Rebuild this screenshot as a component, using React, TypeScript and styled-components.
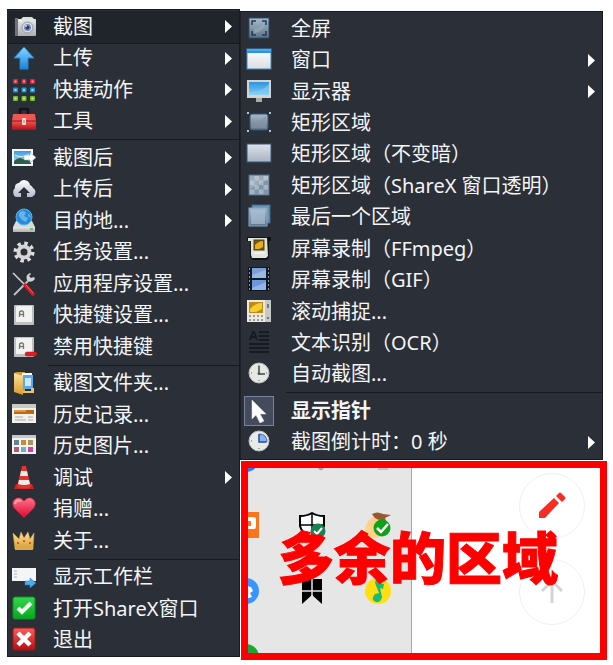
import React from "react";
import styled, { createGlobalStyle, css } from "styled-components";

const Global = createGlobalStyle`
  *, *::before, *::after { box-sizing: border-box; }
  body {
    margin: 0;
    background: #fff;
    font-family: "Noto Sans", "Noto Sans CJK SC", sans-serif;
  }
`;

const Page = styled.main`
  display: grid;
  grid-template-columns: 233fr 367fr;
  min-height: 100vh;
  padding: 9px 6px 5px 7px;
`;

const Column = styled.div`
  display: grid;
  grid-template-rows: 449fr 199fr;
  row-gap: 1px;
  padding-top: 2px;
  min-width: 0;
`;

const Menu = styled.nav<{ $sub?: boolean }>`
  display: flex;
  flex-direction: column;
  min-width: 0;
  padding: 2px 0 ${(p) => (p.$sub ? 2 : 1)}px;
  background: #2b2f38;
  border-right: 1px solid #171a20;
  box-shadow: inset 0 1px #171a20, inset 1px 0 #1d2127, inset 0 -1px #171a20;
  ${(p) => (p.$sub ? css`margin-right: 4px;` : css`margin-bottom: 3px;`)}
`;

const Row = styled.button<{ $sub?: boolean; $active?: boolean; $bold?: boolean }>`
  display: flex;
  flex: 1 0 30px;
  align-items: center;
  gap: ${(p) => (p.$sub ? 20 : 17)}px;
  margin: 0;
  padding: 0 7px 0 ${(p) => (p.$sub ? 7 : 5)}px;
  border: 0;
  background: ${(p) => (p.$active ? "#20242b" : "transparent")};
  box-shadow: ${(p) => (p.$active ? "0 1px #171a20" : "none")};
  color: #f4f5f6;
  font: inherit;
  font-size: 20px;
  font-weight: ${(p) => (p.$bold ? 700 : 400)};
  line-height: 24px;
  text-align: left;
  white-space: nowrap;
`;

const Label = styled.span`
  flex: 1;
`;

const IconBox = styled.span<{ $checked?: boolean }>`
  display: grid;
  place-items: center;
  flex: none;
  width: 24px;
  height: 24px;
  ${(p) =>
    p.$checked &&
    css`
      background: #434b5d;
      outline: 2px solid #434b5d;
      box-shadow: 0 0 0 3px #78829a;
    `}
`;

const Glyph = styled.svg`
  display: block;
  width: 24px;
  height: 24px;
  overflow: visible;
`;

const Arrow = styled.svg`
  flex: none;
  width: 7px;
  height: 13px;
  fill: #fff;
`;

const Divider = styled.hr<{ $sub?: boolean }>`
  flex: none;
  align-self: stretch;
  height: 1px;
  margin: 2px 0 2px ${(p) => (p.$sub ? 46 : 41)}px;
  border: 0;
  background: #171a20;
`;

const Region = styled.section`
  position: relative;
  display: grid;
  grid-template-columns: 171fr 195fr;
  margin-left: 1px;
  overflow: hidden;
  background: #fff;
`;

const Tray = styled.div`
  overflow: hidden;
  height: 199px;
  background: #e6e6e6;
  border-right: 1px solid #a6a6a6;
`;

const TrayGrid = styled.div`
  display: grid;
  grid-template-columns: repeat(3, 66px);
  grid-auto-rows: 66px;
  place-items: center;
  margin: -35px 0 0 -28px;
`;

const TrayIcon = styled.svg`
  display: block;
  width: 26px;
  height: 26px;
  overflow: visible;
`;

const Tools = styled.div`
  display: flex;
  flex-direction: column;
  align-items: flex-end;
  gap: 20px;
  padding: 12px 22px 0 0;
`;

const RoundButton = styled.button`
  display: grid;
  place-items: center;
  width: 66px;
  height: 66px;
  padding: 0;
  border: 1px solid #f0f0f0;
  border-radius: 50%;
  background: #fff;
`;

const ToolIcon = styled.svg`
  width: 28px;
  height: 28px;
`;

const Outline = styled.div`
  position: absolute;
  inset: 0;
  display: grid;
  place-items: center;
  padding: 0 12px 8px 0;
  border: 7px solid #fe0000;
  color: #fe0000;
  font-size: 56px;
  font-weight: 900;
  line-height: 64px;
  white-space: nowrap;
  -webkit-text-stroke: 1px #fe0000;
  pointer-events: none;
`;

const Defs = styled.svg`
  position: absolute;
  width: 0;
  height: 0;
`;

const gradients: [string, string, string][] = [
  ["blueUp", "#8ad6ff", "#1485df"],
  ["red", "#f6605c", "#b80d12"],
  ["silver", "#e8e8e8", "#acaeb0"],
  ["glass", "#a9bccd", "#5d7489"],
  ["pale", "#dfe2ec", "#a7b2c3"],
  ["screen", "#2c95e0", "#82ccf4"],
  ["gold", "#ffe39a", "#d79b2d"],
  ["green", "#34d84a", "#07a51f"],
  ["heart", "#ff7288", "#dc0935"],
  ["cloud", "#ffffff", "#b7b9d2"],
  ["white", "#ffffff", "#dcdde0"],
  ["sky", "#3b9be0", "#bde5f6"],
];

const key = (
  <>
    <rect x="2" y="2" width="20" height="20" rx="1" fill="#bfc0c0" />
    <rect x="4" y="3" width="16" height="16" rx="1" fill="#f2f2f1" />
    <path d="M7.500 14V10q0-2 2-2t2 2v4M7.500 11.500h4" fill="none" stroke="#777" strokeWidth="1.300" />
  </>
);

const icons: Record<string, React.ReactNode> = {
  camera: (
    <>
      <rect x="0" y="4" width="24" height="17" rx="1" fill="url(#silver)" />
      <path d="M0 4h4v17H0z" fill="#25282c" />
      <path d="M3 3h3v18H3z" fill="#717477" />
      <path d="M9 4l2-2h9l2 2z" fill="#ddd" />
      <circle cx="15.500" cy="12.500" r="5.500" fill="#d8dbe2" stroke="#92979f" />
      <circle cx="15.500" cy="12.500" r="3.500" fill="#7d8fba" />
      <circle cx="15.500" cy="12.500" r="2" fill="#2c3a66" />
      <circle cx="14" cy="11" r="1" fill="#cdddff" />
      <path d="M7 6h3" stroke="#fff" />
    </>
  ),
  upload: <path d="M12 1l10 11h-6v11H8V12H2z" fill="url(#blueUp)" stroke="#2486cf" strokeWidth="1" strokeLinejoin="round" />,
  grid: (
    <>
      {["#d91f3b", "#1e93d6", "#74bd20"].map((c, y) =>
        [0, 1, 2].map((x) => (
          <g key={`${c}${x}`}>
            <rect x={1 + x * 8.5} y={1 + y * 8.5} width="5" height="5" rx="1" fill={c} />
            <rect x={2.5 + x * 8.5} y={2.5 + y * 8.5} width="2" height="2" fill="#fff" opacity=".6" />
          </g>
        ))
      )}
    </>
  ),
  toolbox: (
    <>
      <path d="M8 5V1q0-1 1-1h6q1 0 1 1v4" fill="none" stroke="#14161a" strokeWidth="2.500" />
      <path d="M1 5h22l1 7H0z" fill="#ef5754" />
      <path d="M0 11h24v9q0 1-1 1H1q-1 0-1-1z" fill="url(#red)" />
      <path d="M0 12h24" stroke="#8e0c11" />
      <rect x="10" y="9" width="4" height="7" rx="1" fill="#f4d9cf" />
      <path d="M12 11v3" stroke="#bc766f" />
    </>
  ),
  after: (
    <>
      <rect x="0" y="3" width="21" height="17" fill="#f4f8fb" />
      <rect x="2" y="5" width="17" height="13" fill="url(#sky)" />
      <path d="M2 15q5-5 9-2l8 2v3H2z" fill="#315d4b" />
      <path d="M3 9q6 4 14-1" stroke="#d6efff" fill="none" />
      <path d="M12 9h6V6l6 5.500-6 5.500v-3h-6z" fill="#fff" stroke="#7997ad" strokeWidth=".5" />
    </>
  ),
  cloud: (
    <>
      <path d="M4 20a4 5 0 01-1-9 4 4 0 014-5 6 6 0 0111 2 5 5 0 013 3 5 5 0 01-1 9z" fill="url(#cloud)" />
      <path d="M12 10l6 6h-3v4H9v-4H6z" fill="#2b2f38" />
    </>
  ),
  drive: (
    <>
      <path d="M4 12h16l3 6v4q0 1-1 1H2q-1 0-1-1v-4z" fill="#d9dadb" />
      <path d="M1 18h22v4q0 1-1 1H2q-1 0-1-1z" fill="url(#silver)" />
      <circle cx="12" cy="8" r="8" fill="#258cda" stroke="#55b5f0" />
      <path d="M7 4q4-4 7 0l-2 3 4 2-2 4-4-2-3-4zM17 4l2 5-3-2z" fill="#68b4e8" />
      <path d="M18 20h3" stroke="#62ca56" strokeWidth="2" />
    </>
  ),
  gear: (
    <>
      <circle cx="12" cy="12" r="8.800" fill="none" stroke="#dedede" strokeWidth="3.500" strokeDasharray="3.450 3.460" />
      <circle cx="12" cy="12" r="5.500" fill="none" stroke="#d6d6d6" strokeWidth="4" />
    </>
  ),
  tools: (
    <>
      <path d="M1 1l12 12" stroke="#cfcfcf" strokeWidth="1.600" />
      <path d="M2 23L17 8" stroke="#bdc1c3" strokeWidth="2" />
      <path d="M18 1q-5 2-3 7 4 4 8-1l-1-2-3 1-2-2 2-2z" fill="#d1d3d4" />
      <path d="M13 13l8 9" stroke="#d91a24" strokeWidth="3.500" strokeLinecap="round" />
      <path d="M14 13l7 8" stroke="#ff6068" />
    </>
  ),
  key,
  keyoff: (
    <>
      {key}
      <rect x="13" y="17" width="12" height="4" rx="2" fill="#df1f27" stroke="#ae1219" strokeWidth=".5" />
    </>
  ),
  folder: (
    <>
      <path d="M2 2l3-1h8v20H2z" fill="#d79b33" />
      <rect x="10" y="2" width="10" height="14" fill="#fff" />
      <rect x="11" y="4" width="10" height="14" fill="#5aa9ed" />
      <rect x="13" y="7" width="6" height="8" fill="#cae7fd" />
      <path d="M2 2l9 3v19l-9-3z" fill="url(#gold)" />
      <path d="M11 20h8v-3h3v5H11z" fill="#e9c664" />
    </>
  ),
  history: (
    <>
      <rect x="0" y="1" width="24" height="19" fill="#f3f1ec" />
      <path d="M0 1h24v4H0z" fill="#c9c9c7" />
      <rect x="2" y="7" width="20" height="4" fill="#b76913" />
      <path d="M2 7h12v2H2z" fill="#dc9a3c" />
      <path d="M3 14h8M3 17h11M16 14h5M16 17h5" stroke="#aaa" />
    </>
  ),
  gallery: (
    <>
      <rect x="0" y="1" width="24" height="19" fill="#f4f2ef" />
      <path d="M0 1h24v3H0z" fill="#bdc8d0" />
      {["#66808d", "#c18c3c", "#b09255", "#9e6272", "#64b2d8", "#cc45a6"].map((c, i) => (
        <rect key={c} x={2 + (i % 3) * 7} y={i < 3 ? 6 : 13} width="5" height="5" fill={c} />
      ))}
    </>
  ),
  cone: (
    <>
      <path d="M4 18h16l2 5H2z" fill="#cf2423" />
      <path d="M10 0h4l5 21q-7 3-14 0z" fill="#e13430" />
      <path d="M9 5h6l1 5H8zM7 14h10l1 4q-6 2-12 0z" fill="#f1e9e6" />
    </>
  ),
  heart: (
    <>
      <path d="M12 21L2 11Q-1 6 2 3q5-5 10 1 5-6 10-1 3 3 0 8z" fill="url(#heart)" stroke="#b90f2e" strokeWidth=".5" />
      <path d="M3 7q1-5 6-3" fill="none" stroke="#ff9fac" strokeWidth="2" />
    </>
  ),
  crown: (
    <>
      <path d="M3 20L1 4l6 6 2-7 3 6 4-6 2 7 4-6-1 16z" fill="url(#gold)" stroke="#d9a947" strokeWidth=".5" />
      <path d="M3 17h18v4H3z" fill="#dda84a" />
      <circle cx="12" cy="12" r="1" fill="#d83524" />
      <circle cx="6" cy="14" r="1" fill="#d83524" />
      <circle cx="18" cy="14" r="1" fill="#d83524" />
    </>
  ),
  taskbar: (
    <>
      <rect x="0" y="3" width="24" height="13" fill="#f3f5f7" />
      <path d="M2 6h3M2 9h3M2 12h3" stroke="#aeb4ba" />
      <path d="M13 16h5v-3l6 5-6 5v-3h-5z" fill="#4caceb" stroke="#2878b9" strokeWidth=".5" />
    </>
  ),
  check: (
    <>
      <rect x="1" y="0" width="22" height="22" rx="2" fill="url(#green)" stroke="#079223" />
      <path d="M6 11l4 4 9-9" fill="none" stroke="#f5fff5" strokeWidth="4" />
    </>
  ),
  exit: (
    <>
      <rect x="1" y="0" width="22" height="22" rx="2" fill="url(#red)" stroke="#a91417" />
      <path d="M6 5l12 12M18 5L6 17" stroke="#fff" strokeWidth="4.500" />
    </>
  ),
  full: (
    <>
      <rect x="2" y="1" width="20" height="20" fill="url(#glass)" stroke="#2c4b69" />
      <path d="M7 12q5 0 10-6v4q-4 6-10 6z" fill="#9caebd" opacity=".6" />
      <path d="M5 8V4h4M15 4h4v4M19 14v4h-4M9 18H5v-4" fill="none" stroke="#203b57" strokeWidth="1.500" />
    </>
  ),
  window: (
    <>
      <rect x="0" y="1" width="24" height="20" fill="url(#white)" stroke="#3688cb" />
      <path d="M0 1h24v4H0z" fill="#2b94df" />
      <path d="M0 2h24" stroke="#69c4f9" />
    </>
  ),
  monitor: (
    <>
      <path d="M9 17h6v5H9z" fill="#a8aaab" />
      <rect x="0" y="0" width="24" height="18" fill="#d6d4d0" />
      <rect x="2" y="2" width="20" height="13" fill="url(#screen)" />
      <path d="M2 12q13 0 20-8v11H2z" fill="#8ed1f2" opacity=".5" />
    </>
  ),
  rect: (
    <>
      <rect x="3" y="3" width="18" height="16" rx="2" fill="url(#glass)" stroke="#355370" />
      <path d="M5 11q8 0 14-6v12H5z" fill="#8595a4" opacity=".6" />
      {[[0, 1], [22, 1], [0, 19], [22, 19]].map(([x, y]) => (
        <rect key={`${x}-${y}`} x={x} y={y} width="2" height="2" fill="#a9c7e2" />
      ))}
    </>
  ),
  light: <rect x="0" y="2" width="24" height="18" fill="url(#pale)" stroke="#355677" />,
  checker: (
    <>
      <rect x="2" y="1" width="20" height="20" fill="#a5b5c3" stroke="#486b8c" />
      {[0, 1, 2, 3].map((y) =>
        [0, 1].map((x) => (
          <rect key={`${x}${y}`} x={3 + x * 9 + (y % 2) * 4.5} y={2 + y * 4.5} width="4.500" height="4.500" fill="#8296aa" />
        ))
      )}
      <path d="M3 2h18v3L3 15z" fill="#fff" opacity=".2" />
    </>
  ),
  layers: (
    <>
      <rect x="5" y="0" width="18" height="18" fill="#6f93b4" stroke="#426a8f" />
      <rect x="2" y="3" width="18" height="18" fill="url(#glass)" stroke="#7fa5c8" />
      <rect x="4" y="5" width="14" height="14" fill="#a9c0d4" opacity=".7" />
    </>
  ),
  ffmpeg: (
    <>
      <path d="M0 0h24v4h-2v16l-2 3H6l-3-3V4H0z" fill="#0f1114" />
      <path d="M1 1h19l1 18-2 2H5l-1-3V4H1z" fill="#e2e2df" />
      <rect x="7" y="3" width="10" height="10" fill="#725808" stroke="#4c430f" />
      <path d="M8 8q4-4 8-4v6l-4 2H8z" fill="#e3b01c" />
      <path d="M7 16h11" stroke="#fff" />
    </>
  ),
  film: (
    <>
      <rect x="1" y="-1" width="22" height="24" fill="#101720" />
      <rect x="5" y="0" width="14" height="10" fill="#7c9fd4" />
      <rect x="5" y="12" width="14" height="10" fill="#6d97dc" />
      <path d="M5 7l14-5v8H5zM5 20l14-6v8H5z" fill="#aec9f2" opacity=".6" />
      <path d="M2.500 0v23M21.500 0v23" stroke="#8f989e" strokeDasharray="2 2" />
    </>
  ),
  scroll: (
    <>
      <rect x="0" y="0" width="24" height="22" fill="#eeeae0" />
      <rect x="2" y="2" width="14" height="11" fill="#c18a10" />
      <path d="M3 9q5-6 12-6v6l-6 3H3z" fill="#f8cc31" />
      <path d="M18 0h6v22h-6z" fill="#c7c9c9" />
      <path d="M20 4h2v4h-2zM20 17h2v2h-2z" fill="#72777a" />
      <path d="M2 16h15M2 20h15" stroke="#999" strokeWidth="2" strokeDasharray="2 2" />
    </>
  ),
  ocr: (
    <>
      <path d="M3 9L6 1h1l3 8M4.500 6h4" fill="none" stroke="#171b20" strokeWidth="2" />
      <path d="M12 1h10M12 5h10M12 9h10M2 13h20M2 17h20M2 21h20" stroke="#171b20" strokeWidth="2" />
    </>
  ),
  clock: (
    <>
      <circle cx="12" cy="11" r="10" fill="#e5e8e3" stroke="#b8bdb9" />
      <path d="M12 4v8h6" fill="none" stroke="#414747" strokeWidth="1.500" />
      <path d="M12 3v1M20 11h-1M12 19v-1M4 11h1" stroke="#666" />
      <circle cx="12" cy="11.500" r="1.500" fill="#555" />
    </>
  ),
  timer: (
    <>
      <circle cx="12" cy="11" r="10" fill="#e8ebea" stroke="#b8bdc4" />
      <path d="M12 12V4q8 0 8 8z" fill="#8fb0ea" stroke="#4269b3" />
      <path d="M12 4v8h7" fill="none" stroke="#39599b" strokeWidth="1.500" />
      <path d="M12 19v-1M4 11h1" stroke="#666" />
    </>
  ),
  pointer: <path d="M5 1v19l4-4 4 8 4-2-4-7h6z" fill="#fff" stroke="#dce2ec" strokeWidth=".5" />,
};

type Item = { icon: string; text: string; more?: boolean; active?: boolean; checked?: boolean } | null;

const mainItems: Item[] = [
  { icon: "camera", text: "截图", more: true, active: true },
  { icon: "upload", text: "上传", more: true },
  { icon: "grid", text: "快捷动作", more: true },
  { icon: "toolbox", text: "工具", more: true },
  null,
  { icon: "after", text: "截图后", more: true },
  { icon: "cloud", text: "上传后", more: true },
  { icon: "drive", text: "目的地...", more: true },
  { icon: "gear", text: "任务设置..." },
  { icon: "tools", text: "应用程序设置..." },
  { icon: "key", text: "快捷键设置..." },
  { icon: "keyoff", text: "禁用快捷键" },
  null,
  { icon: "folder", text: "截图文件夹..." },
  { icon: "history", text: "历史记录..." },
  { icon: "gallery", text: "历史图片..." },
  { icon: "cone", text: "调试", more: true },
  { icon: "heart", text: "捐赠..." },
  { icon: "crown", text: "关于..." },
  null,
  { icon: "taskbar", text: "显示工作栏" },
  { icon: "check", text: "打开ShareX窗口" },
  { icon: "exit", text: "退出" },
];

const captureItems: Item[] = [
  { icon: "full", text: "全屏" },
  { icon: "window", text: "窗口", more: true },
  { icon: "monitor", text: "显示器", more: true },
  { icon: "rect", text: "矩形区域" },
  { icon: "light", text: "矩形区域（不变暗）" },
  { icon: "checker", text: "矩形区域（ShareX 窗口透明）" },
  { icon: "layers", text: "最后一个区域" },
  { icon: "ffmpeg", text: "屏幕录制（FFmpeg）" },
  { icon: "film", text: "屏幕录制（GIF）" },
  { icon: "scroll", text: "滚动捕捉..." },
  { icon: "ocr", text: "文本识别（OCR）" },
  { icon: "clock", text: "自动截图..." },
  null,
  { icon: "pointer", text: "显示指针", checked: true },
  { icon: "timer", text: "截图倒计时：0 秒", more: true },
];

function MenuList({ items, sub, label }: { items: Item[]; sub?: boolean; label: string }) {
  return (
    <Menu $sub={sub} aria-label={label}>
      {items.map((item, i) =>
        item ? (
          <Row key={item.text} type="button" $sub={sub} $active={item.active} $bold={item.checked}>
            <IconBox $checked={item.checked}>
              <Glyph viewBox="0 0 24 24" aria-hidden="true">{icons[item.icon]}</Glyph>
            </IconBox>
            <Label>{item.text}</Label>
            {item.more && (
              <Arrow viewBox="0 0 7 13" aria-hidden="true">
                <path d="M0 0l7 6.500L0 13z" />
              </Arrow>
            )}
          </Row>
        ) : (
          <Divider key={i} $sub={sub} />
        )
      )}
    </Menu>
  );
}

const trayIcons: React.ReactNode[] = [
  <circle cx="13" cy="13" r="13" fill="#2f7df0" />,
  <path d="M19 21q3 4 5 1" fill="none" stroke="#a5a5a5" strokeWidth="2" />,
  <path d="M13 23h10" stroke="#c2c2c2" strokeWidth="2" />,
  <>
    <rect width="26" height="26" fill="#f9741c" />
    <path d="M3 5h18q2 0 2 2v8q0 2-2 2H3v-3h15V9H3z" fill="#fff" />
  </>,
  <>
    <path d="M13 1q5 3 12 3v10q-2 8-12 12Q3 22 1 14V4q7 0 12-3z" fill="#fff" stroke="#000" strokeWidth="2" />
    <path d="M13 1v24M1 13h24" stroke="#000" strokeWidth="1.500" />
    <circle cx="19" cy="19" r="7.500" fill="#168451" />
    <path d="M15 19l3 3 5-6" fill="none" stroke="#fff" strokeWidth="2" />
  </>,
  <>
    <path d="M11 4Q1 7 0 18q1 8 12 8 10-2 11-14z" fill="#ffd18a" />
    <path d="M7 2q3 6 9 6l6 4-2-6 6-3-8-1Q12-1 7 2z" fill="#98592e" />
    <circle cx="17" cy="16" r="8.500" fill="#10a019" />
    <path d="M12 16l4 4 7-8" fill="none" stroke="#fff" strokeWidth="2.500" />
  </>,
  <>
    <circle cx="13" cy="13" r="13" fill="#3895ff" />
    <path d="M9 7l9 2 2 4-3 2 2 4-10 3z" fill="#fff" />
  </>,
  <>
    <path d="M3 1h20v25l-10-9-10 9z" fill="#000" />
    <path d="M13 1v17M2 13h22" stroke="#e6e6e6" strokeWidth="1.500" />
  </>,
  <>
    <circle cx="13" cy="13" r="13" fill="#ffdf12" />
    <path d="M11 1l2 0q0 4 6 5l-1 5-3-1 2 9q-1 6-6 5-6-2-1-8l4-1-4-10z" fill="#19bb77" />
  </>,
  <>
    <circle cx="13" cy="13" r="13" fill="#17a82e" />
    <circle cx="10" cy="15" r="9" fill="#3b78ec" />
  </>,
];

export default function App() {
  return (
    <>
      <Global />
      <Defs aria-hidden="true">
        <defs>
          {gradients.map(([id, from, to]) => (
            <linearGradient key={id} id={id} x1="0" y1="0" x2="0" y2="1">
              <stop offset="0" stopColor={from} />
              <stop offset="1" stopColor={to} />
            </linearGradient>
          ))}
        </defs>
      </Defs>
      <Page>
        <MenuList items={mainItems} label="ShareX" />
        <Column>
          <MenuList items={captureItems} sub label="截图" />
          <Region>
            <Tray>
              <TrayGrid>
                {trayIcons.map((icon, i) => (
                  <TrayIcon key={i} viewBox="0 0 26 26" aria-hidden="true">{icon}</TrayIcon>
                ))}
              </TrayGrid>
            </Tray>
            <Tools>
              <RoundButton type="button" aria-label="编辑">
                <ToolIcon viewBox="0 0 28 28" aria-hidden="true">
                  <path d="M1 20L16 6l5 5L7 26H1zM18 4l3-3q1-1 2 0l4 4q1 1 0 2l-3 3z" fill="#fa2b20" />
                </ToolIcon>
              </RoundButton>
              <RoundButton type="button" aria-label="返回顶部">
                <ToolIcon viewBox="0 0 28 28" aria-hidden="true">
                  <path d="M14 25V3M4 13L14 3l10 10" fill="none" stroke="#d4d4d4" strokeWidth="3" />
                </ToolIcon>
              </RoundButton>
            </Tools>
            <Outline>多余的区域</Outline>
          </Region>
        </Column>
      </Page>
    </>
  );
}
